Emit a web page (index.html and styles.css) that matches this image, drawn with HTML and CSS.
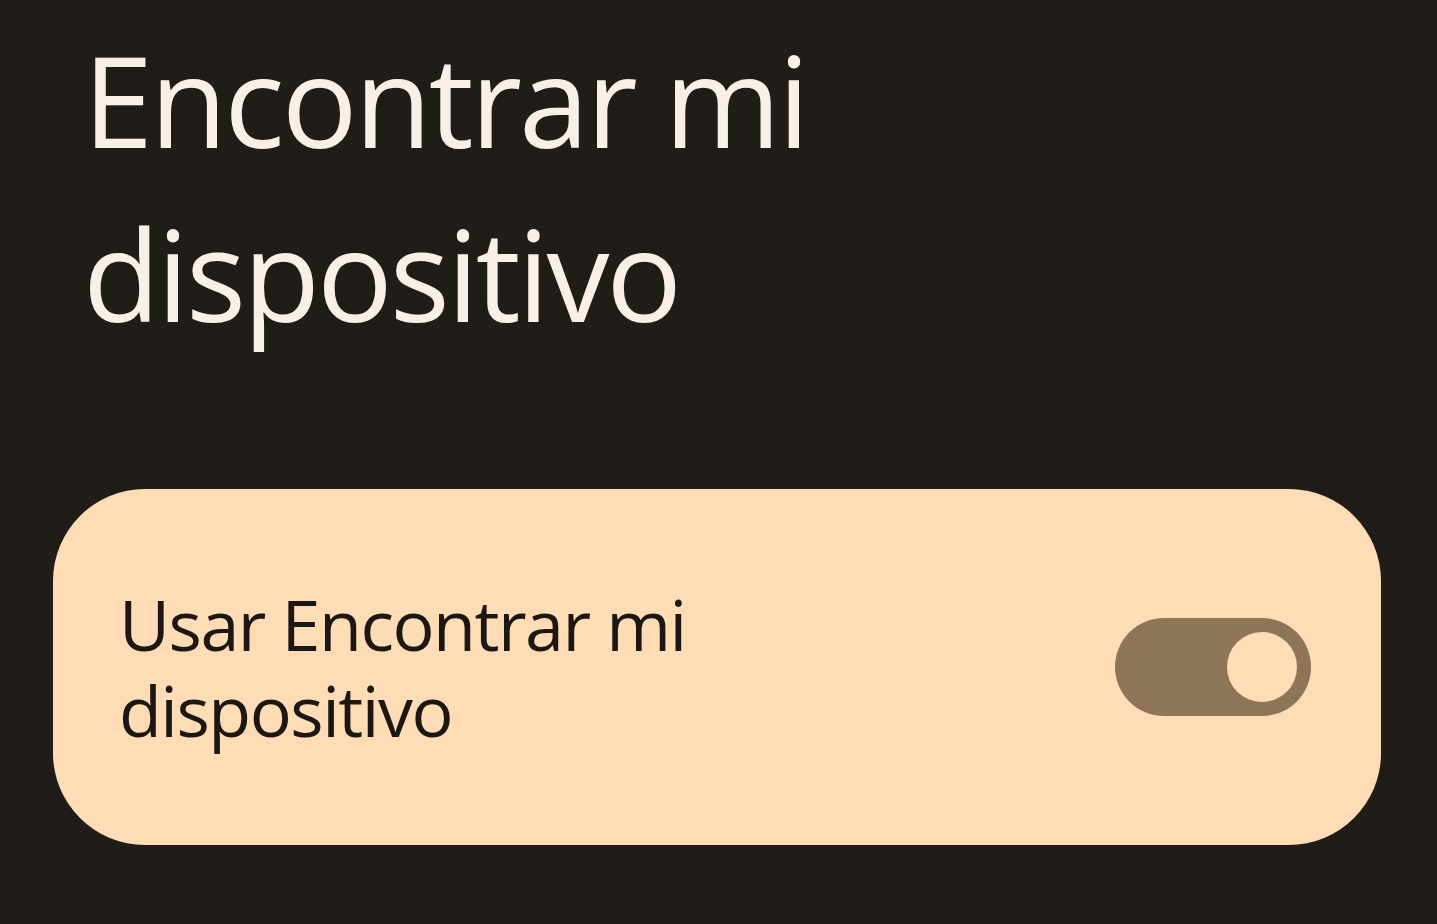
FILE: index.html
```html
<!DOCTYPE html>
<html lang="es">
<head>
    <meta charset="UTF-8">
    <meta name="viewport" content="width=device-width, initial-scale=1.0">
    <title>Encontrar mi dispositivo</title>
    <link rel="stylesheet" href="styles.css">
</head>
<body>
    <div class="page">
        <h1 class="page-title">Encontrar mi dispositivo</h1>

        <div class="switch-card">
            <p class="switch-label">Usar Encontrar mi dispositivo</p>
            <div class="toggle on">
                <span class="toggle-thumb"></span>
            </div>
        </div>
    </div>
</body>
</html>
```

FILE: styles.css
```css
* {
    padding: 0;
    margin: 0;
    box-sizing: border-box;
}

body {
    background-color: #201d19;
    font-family: "Open Sans", "Noto Sans", sans-serif;
    width: 1437px;
    height: 924px;
    overflow: hidden;
}

.page {
    padding: 12px 56px 0 53px;
}

.page-title {
    font-weight: 400;
    font-size: 126px;
    line-height: 174px;
    color: #f8efe8;
    padding-left: 30px;
    width: 900px;
    letter-spacing: -3px;
}

.switch-card {
    margin-top: 129px;
    height: 356px;
    background-color: #fedcb5;
    border-radius: 92px;
    display: flex;
    align-items: center;
    justify-content: space-between;
    padding: 0 70px 0 66px;
}

.switch-label {
    font-size: 70px;
    line-height: 86px;
    color: #1c1712;
    width: 600px;
    letter-spacing: -1.5px;
}

.toggle {
    width: 196px;
    height: 98px;
    border-radius: 49px;
    background-color: #8f7558;
    display: flex;
    align-items: center;
    padding: 0 14px;
}

.toggle.on {
    justify-content: flex-end;
}

.toggle-thumb {
    width: 70px;
    height: 70px;
    border-radius: 50%;
    background-color: #fedcb5;
}
```
